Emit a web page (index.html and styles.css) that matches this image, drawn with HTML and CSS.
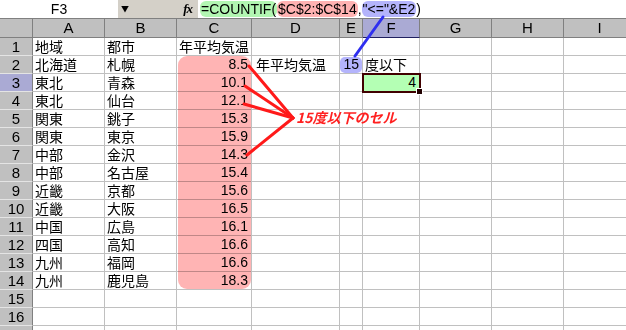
FILE: index.html
```html
<!DOCTYPE html>
<html lang="ja">
<head>
<meta charset="utf-8">
<link rel="stylesheet" href="styles.css">
</head>
<body>
<div class="page">
  <div class="fbar">
    <div class="namebox">F3</div>
    <div class="fbtns"><span class="dd">&#9660;</span><span class="fx">fx</span></div>
    <div class="formula"><span class="hl hl-g">=COUNTIF(</span><span class="hl hl-r">$C$2:$C$14</span>,<span class="hl hl-b">"&lt;="&amp;E2</span>)</div>
  </div>
  <div class="sheet">
    <div class="ch corner"></div><div class="ch">A</div><div class="ch">B</div><div class="ch">C</div><div class="ch">D</div><div class="ch">E</div><div class="ch sel">F</div><div class="ch">G</div><div class="ch">H</div><div class="ch">I</div>

    <div class="rh">1</div><div class="c">地域</div><div class="c">都市</div><div class="c">年平均気温</div><div class="c"></div><div class="c"></div><div class="c"></div><div class="c"></div><div class="c"></div><div class="c"></div>
    <div class="rh">2</div><div class="c">北海道</div><div class="c">札幌</div><div class="c n">8.5</div><div class="c pad">年平均気温</div><div class="c n">15</div><div class="c">度以下</div><div class="c"></div><div class="c"></div><div class="c"></div>
    <div class="rh sel">3</div><div class="c">東北</div><div class="c">青森</div><div class="c n">10.1</div><div class="c"></div><div class="c"></div><div class="c n active">4<span class="handle"></span></div><div class="c"></div><div class="c"></div><div class="c"></div>
    <div class="rh">4</div><div class="c">東北</div><div class="c">仙台</div><div class="c n">12.1</div><div class="c"></div><div class="c"></div><div class="c"></div><div class="c"></div><div class="c"></div><div class="c"></div>
    <div class="rh">5</div><div class="c">関東</div><div class="c">銚子</div><div class="c n">15.3</div><div class="c"></div><div class="c"></div><div class="c"></div><div class="c"></div><div class="c"></div><div class="c"></div>
    <div class="rh">6</div><div class="c">関東</div><div class="c">東京</div><div class="c n">15.9</div><div class="c"></div><div class="c"></div><div class="c"></div><div class="c"></div><div class="c"></div><div class="c"></div>
    <div class="rh">7</div><div class="c">中部</div><div class="c">金沢</div><div class="c n">14.3</div><div class="c"></div><div class="c"></div><div class="c"></div><div class="c"></div><div class="c"></div><div class="c"></div>
    <div class="rh">8</div><div class="c">中部</div><div class="c">名古屋</div><div class="c n">15.4</div><div class="c"></div><div class="c"></div><div class="c"></div><div class="c"></div><div class="c"></div><div class="c"></div>
    <div class="rh">9</div><div class="c">近畿</div><div class="c">京都</div><div class="c n">15.6</div><div class="c"></div><div class="c"></div><div class="c"></div><div class="c"></div><div class="c"></div><div class="c"></div>
    <div class="rh">10</div><div class="c">近畿</div><div class="c">大阪</div><div class="c n">16.5</div><div class="c"></div><div class="c"></div><div class="c"></div><div class="c"></div><div class="c"></div><div class="c"></div>
    <div class="rh">11</div><div class="c">中国</div><div class="c">広島</div><div class="c n">16.1</div><div class="c"></div><div class="c"></div><div class="c"></div><div class="c"></div><div class="c"></div><div class="c"></div>
    <div class="rh">12</div><div class="c">四国</div><div class="c">高知</div><div class="c n">16.6</div><div class="c"></div><div class="c"></div><div class="c"></div><div class="c"></div><div class="c"></div><div class="c"></div>
    <div class="rh">13</div><div class="c">九州</div><div class="c">福岡</div><div class="c n">16.6</div><div class="c"></div><div class="c"></div><div class="c"></div><div class="c"></div><div class="c"></div><div class="c"></div>
    <div class="rh">14</div><div class="c">九州</div><div class="c">鹿児島</div><div class="c n">18.3</div><div class="c"></div><div class="c"></div><div class="c"></div><div class="c"></div><div class="c"></div><div class="c"></div>
    <div class="rh">15</div><div class="c"></div><div class="c"></div><div class="c"></div><div class="c"></div><div class="c"></div><div class="c"></div><div class="c"></div><div class="c"></div><div class="c"></div>
    <div class="rh">16</div><div class="c"></div><div class="c"></div><div class="c"></div><div class="c"></div><div class="c"></div><div class="c"></div><div class="c"></div><div class="c"></div><div class="c"></div>
    <div class="rh"></div><div class="c"></div><div class="c"></div><div class="c"></div><div class="c"></div><div class="c"></div><div class="c"></div><div class="c"></div><div class="c"></div><div class="c"></div>
  </div>

  <div class="range-hl"></div>
  <div class="ref-hl"></div>
  <svg class="marks" width="626" height="330" viewBox="0 0 626 330">
    <line x1="355" y1="56" x2="383" y2="17" stroke="#2f2ff0" stroke-width="3" stroke-linecap="round"/>
    <g stroke="#ff1a1a" stroke-width="3" stroke-linecap="round">
      <line x1="293" y1="118" x2="249" y2="66"/>
      <line x1="293" y1="118" x2="245" y2="86"/>
      <line x1="293" y1="118" x2="244" y2="104"/>
      <line x1="293" y1="118" x2="247" y2="155"/>
    </g>
  </svg>
  <div class="label">15度以下のセル</div>
</div>
</body>
</html>
```

FILE: styles.css
```css
html, body {
  margin: 0;
  padding: 0;
  background: #ffffff;
}
body {
  width: 626px;
  height: 330px;
  overflow: hidden;
  font-family: "Noto Sans CJK JP", "Liberation Sans", sans-serif;
  font-size: 14px;
  color: #000;
}
.page {
  position: relative;
  width: 626px;
  height: 330px;
  overflow: hidden;
}
.fbar {
  display: flex;
  height: 18px;
  border-bottom: 1px solid #808080;
  background: #fff;
}
.namebox {
  width: 118px;
  text-align: center;
  line-height: 18px;
  font-family: "Liberation Sans", sans-serif;
  font-size: 14px;
}
.fbtns {
  width: 80px;
  background: #d4d0c8;
  display: flex;
  align-items: center;
  justify-content: space-between;
  padding: 0 6px 0 3px;
  box-sizing: border-box;
}
.dd {
  font-size: 8px;
  line-height: 18px;
}
.fx {
  font-family: "Liberation Serif", serif;
  font-style: italic;
  font-weight: bold;
  font-size: 13px;
  letter-spacing: -1px;
}
.formula {
  padding-left: 2px;
  font-family: "Liberation Sans", sans-serif;
  font-size: 14px;
  line-height: 15px;
  padding-top: 2px;
  white-space: nowrap;
}
.hl {
  border-radius: 6px;
  padding: 0 1px;
}
.hl-g { background: #b2f6b2; }
.hl-r { background: #ffb2b2; }
.hl-b { background: #b4b4fc; }

.sheet {
  display: grid;
  grid-template-columns: 33px 72px 72px 75px 88px 23px 57px 72px 72px 72px;
  grid-template-rows: 19px;
  grid-auto-rows: 18px;
}
.ch {
  background: #c0c0c0;
  border-right: 1px solid #808080;
  border-bottom: 1px solid #808080;
  box-sizing: border-box;
  text-align: center;
  font-family: "Liberation Sans", sans-serif;
  font-size: 15px;
  line-height: 18px;
}
.ch.sel {
  background: #aaaad4;
  border-bottom: 1px solid #202060;
}
.rh {
  background: #c0c0c0;
  border-right: 1px solid #808080;
  border-bottom: 1px solid #e4e4e4;
  box-sizing: border-box;
  text-align: center;
  font-family: "Liberation Sans", sans-serif;
  font-size: 15px;
  line-height: 17px;
}
.rh.sel {
  background: #aaaad4;
}
.c {
  position: relative;
  border-right: 1px solid #c0c0c0;
  border-bottom: 1px solid #c0c0c0;
  box-sizing: border-box;
  padding-left: 2px;
  line-height: 17px;
  white-space: nowrap;
}
.c.pad {
  padding-left: 4px;
}
.c.n {
  text-align: right;
  padding-right: 3px;
  font-family: "Liberation Sans", sans-serif;
  font-size: 14px;
}
.c.active {
  background: #b4ffb4;
  outline: 2px solid #400000;
  outline-offset: -1px;
  z-index: 2;
}
.handle {
  position: absolute;
  right: -4px;
  bottom: -4px;
  width: 5px;
  height: 5px;
  background: #200000;
  border: 1px solid #fff;
}
.range-hl {
  position: absolute;
  left: 178px;
  top: 56px;
  width: 73px;
  height: 233px;
  border-radius: 9px;
  background: #ffb4b4;
  mix-blend-mode: multiply;
}
.ref-hl {
  position: absolute;
  left: 340px;
  top: 57px;
  width: 22px;
  height: 16px;
  border-radius: 5px;
  background: #b4b4fc;
  mix-blend-mode: multiply;
}
.marks {
  position: absolute;
  left: 0;
  top: 0;
  pointer-events: none;
}
.label {
  position: absolute;
  left: 296px;
  top: 108px;
  color: #ff2020;
  font-weight: bold;
  font-style: italic;
  font-size: 14px;
  line-height: 18px;
  white-space: nowrap;
}
```
